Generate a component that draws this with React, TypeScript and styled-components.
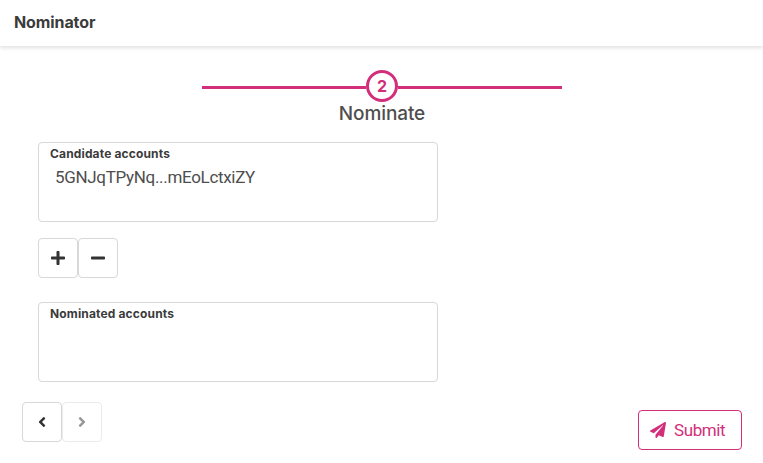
import React from 'react';
import styled, { createGlobalStyle } from 'styled-components';
import { FaPlus, FaMinus, FaAngleLeft, FaAngleRight, FaPaperPlane } from 'react-icons/fa';

const GlobalStyle = createGlobalStyle`
  * { box-sizing: border-box; }
  body {
    margin: 0;
    background: #fff;
    color: #4e4e4e;
    font-family: Roboto, 'Liberation Sans', sans-serif;
    overflow: hidden;
  }
`;

const Page = styled.div`
  height: 463px;
  display: flex;
  flex-direction: column;
`;

const Header = styled.header`
  flex: none;
  height: 46px;
  padding: 0 14px;
  box-shadow: 0 2px 4px rgba(0, 0, 0, 0.12);
`;

const Title = styled.h1`
  margin: 0;
  font: 700 16px/44px Inter, sans-serif;
  letter-spacing: -0.1px;
  color: #3b3b3b;
`;

const Stepper = styled.div`
  display: flex;
  flex-direction: column;
  align-items: center;
  padding: 24px 0 0 1px;
  height: 96px;
`;

const Track = styled.div`
  display: flex;
  align-items: center;
  width: 360px;
`;

const Line = styled.div`
  flex: 1;
  height: 3px;
  margin-top: 2px;
  background: #d32e79;
`;

const StepCircle = styled.div`
  width: 32px;
  height: 32px;
  border: 3px solid #d32e79;
  border-radius: 50%;
  color: #d32e79;
  font: 700 16px/26px Inter, sans-serif;
  text-align: center;
`;

const StepName = styled.div`
  padding-top: 1px;
  font: 500 19px/22px Inter, sans-serif;
  letter-spacing: -0.1px;
`;

const Form = styled.main`
  display: flex;
  flex-direction: column;
  padding-left: 38px;
`;

const Box = styled.section`
  width: 400px;
  height: 80px;
  border: 1px solid #d8d8d8;
  border-radius: 4px;
  padding: 4px 11px;
`;

const Label = styled.h2`
  margin: 0;
  font: 700 12px/14px Inter, sans-serif;
  letter-spacing: 0.15px;
  color: #3b3b3b;
`;

const Account = styled.div`
  padding: 6px 0 0 5px;
  font-size: 17px;
  line-height: 20px;
  letter-spacing: -0.32px;
`;

const ButtonGroup = styled.div`
  display: flex;
`;

const PickButtons = styled(ButtonGroup)`
  padding: 16px 0 24px;
`;

const IconButton = styled.button`
  display: flex;
  align-items: center;
  justify-content: center;
  width: 40px;
  height: 40px;
  padding: 0;
  border: 1px solid #d8d8d8;
  border-radius: 4px;
  background: #fff;
  color: #333;
  font-size: 16px;
  &:disabled { opacity: 0.5; }
`;

const Footer = styled.footer`
  display: flex;
  justify-content: space-between;
  padding: 20px 21px 0 22px;
`;

const SubmitButton = styled.button`
  display: flex;
  align-items: center;
  gap: 8px;
  width: 104px;
  height: 40px;
  margin-top: 8px;
  padding: 0 0 0 11px;
  border: 1px solid #d32e79;
  border-radius: 4px;
  background: #fff;
  color: #d32e79;
  font: 400 17px Roboto, sans-serif;
  letter-spacing: -0.4px;
  svg { width: 16px; height: 16px; }
`;

export default function App() {
  return (
    <Page>
      <GlobalStyle />
      <Header><Title>Nominator</Title></Header>
      <Stepper>
        <Track><Line /><StepCircle>2</StepCircle><Line /></Track>
        <StepName>Nominate</StepName>
      </Stepper>
      <Form>
        <Box>
          <Label>Candidate accounts</Label>
          <Account>5GNJqTPyNq...mEoLctxiZY</Account>
        </Box>
        <PickButtons>
          <IconButton aria-label="Add"><FaPlus /></IconButton>
          <IconButton aria-label="Remove"><FaMinus /></IconButton>
        </PickButtons>
        <Box><Label>Nominated accounts</Label></Box>
      </Form>
      <Footer>
        <ButtonGroup>
          <IconButton aria-label="Previous"><FaAngleLeft /></IconButton>
          <IconButton aria-label="Next" disabled><FaAngleRight /></IconButton>
        </ButtonGroup>
        <SubmitButton><FaPaperPlane />Submit</SubmitButton>
      </Footer>
    </Page>
  );
}
